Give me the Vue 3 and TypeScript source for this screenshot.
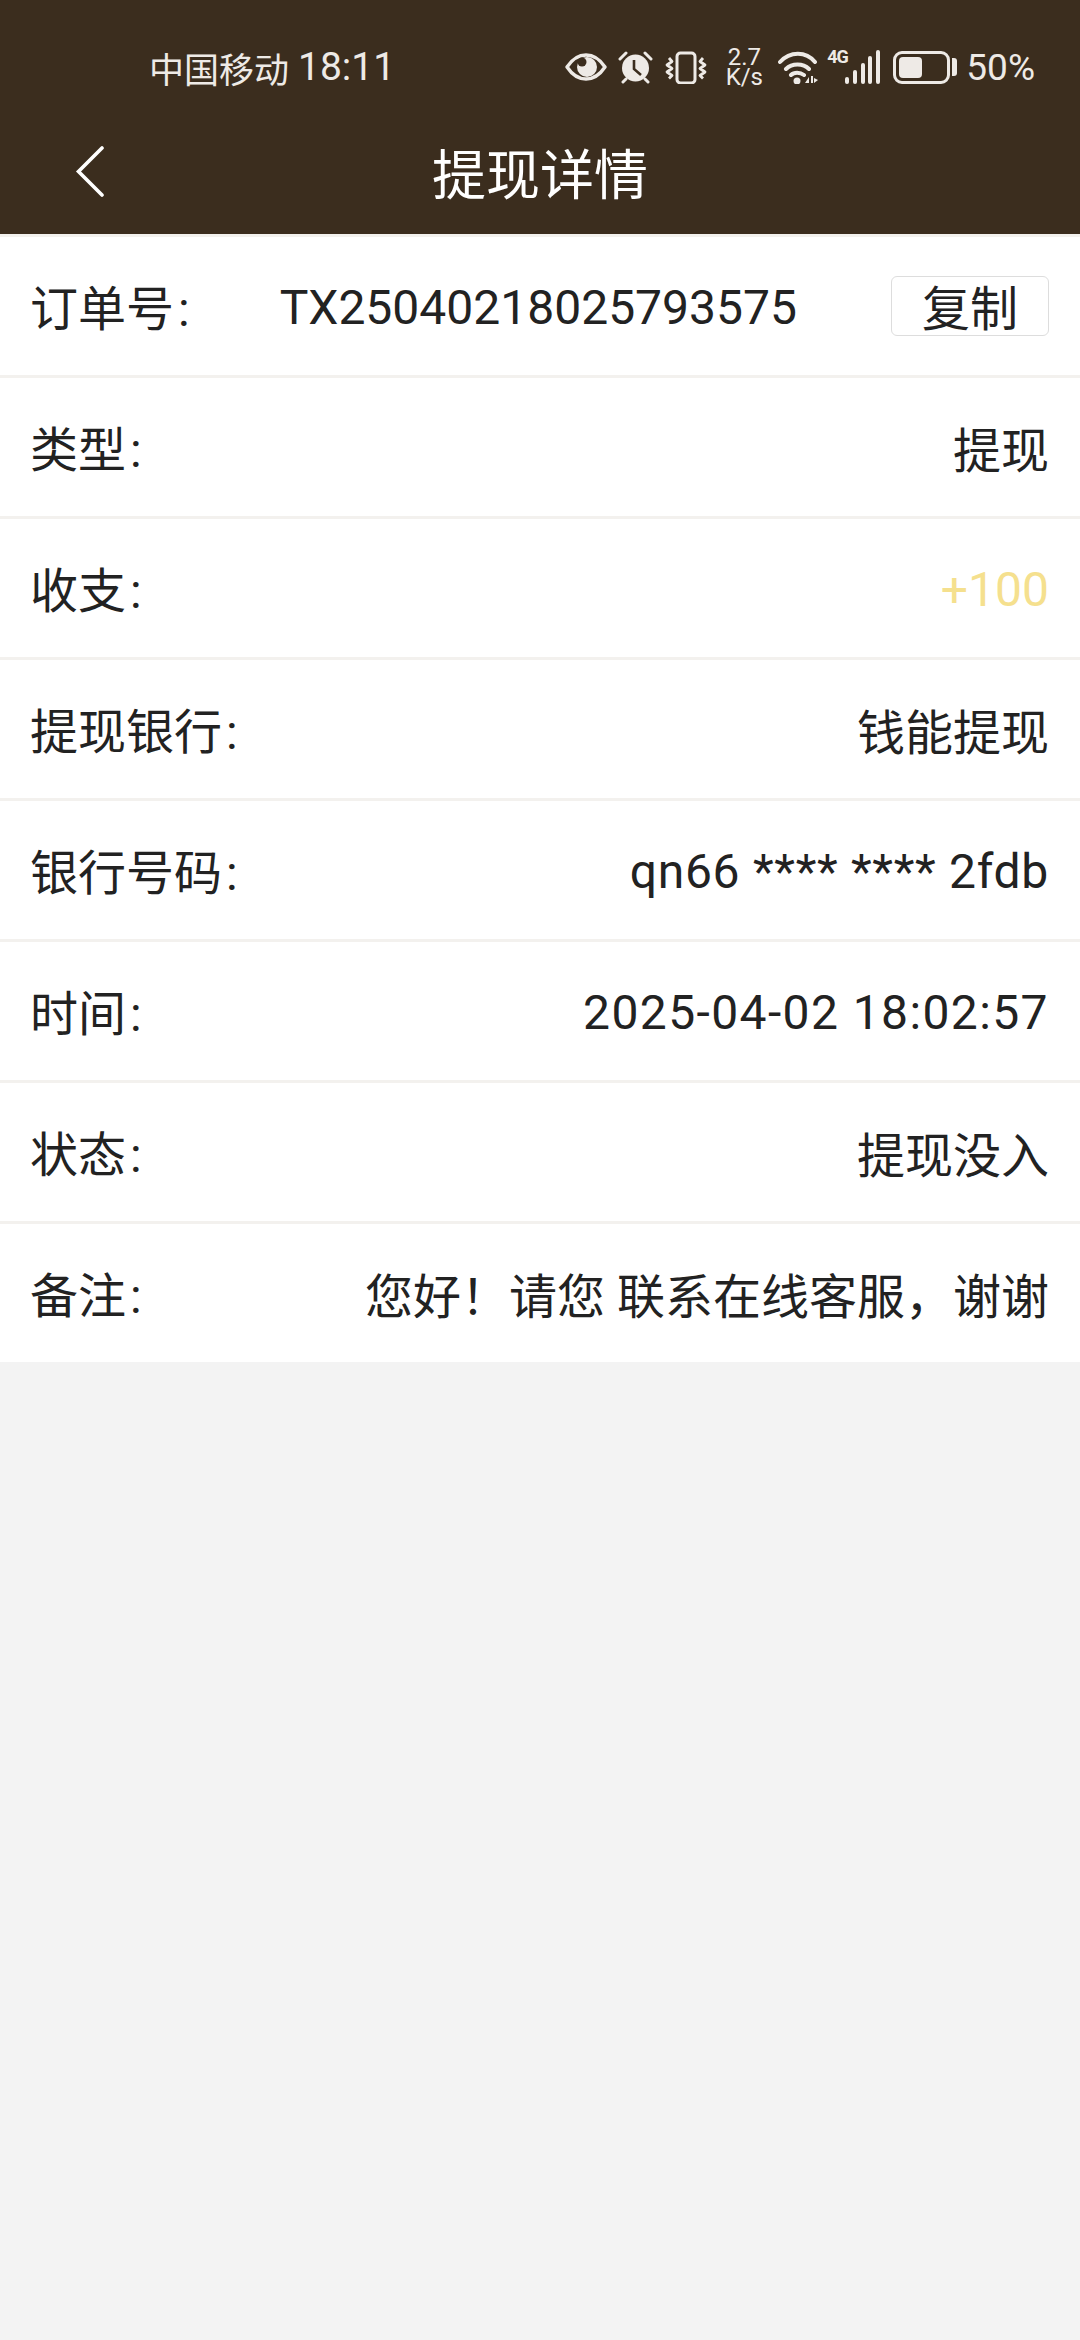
<script setup lang="ts">
type Row = { label: string; value: string; tone?: string }

const rows: Row[] = [
  { label: '类型', value: '提现' },
  { label: '收支', value: '+100', tone: 'gold' },
  { label: '提现银行', value: '钱能提现' },
  { label: '银行号码', value: 'qn66 **** **** 2fdb', tone: 'card' },
  { label: '时间', value: '2025-04-02 18:02:57', tone: 'date' },
  { label: '状态', value: '提现没入' },
  { label: '备注', value: '您好！请您 联系在线客服，谢谢' },
]
</script>

<template>
  <div class="page">
    <div class="top">
      <div class="status">
        <span class="carrier">中国移动</span>
        <span class="clock">18:11</span>
        <div class="icons">
          <svg class="eye" width="42" height="28" viewBox="0 0 42 28">
            <path d="M2 14C8 5 14 2 21 2s13 3 19 12c-6 9-12 12-19 12S8 23 2 14z" fill="none" stroke="#eeeae6" stroke-width="3.4" stroke-linejoin="round" />
            <circle cx="22" cy="14" r="10" fill="#eeeae6" />
            <circle cx="17" cy="9" r="4.500" fill="#3b2d1e" />
          </svg>
          <svg class="alarm" width="35" height="33" viewBox="0 0 35 33">
            <circle cx="17.5" cy="17" r="13.5" fill="#eeeae6" />
            <path d="M16 9v9l7 6" fill="none" stroke="#3b2d1e" stroke-width="2.6" />
            <path d="M2 8l6-6M33 8l-6-6M5 31l3-3M30 31l-3-3" stroke="#eeeae6" stroke-width="3" stroke-linecap="round" />
          </svg>
          <svg class="vibrate" width="42" height="33" viewBox="0 0 42 33">
            <rect x="12" y="2" width="18" height="30" rx="3.5" fill="none" stroke="#eeeae6" stroke-width="3" />
            <path d="M4 7l3 3.500-5 3.500 5 3.500-5 3.500 5 3.500-3 3M38 7l-3 3.500 5 3.500-5 3.500 5 3.500-5 3.500 3 3" fill="none" stroke="#eeeae6" stroke-width="2.800" stroke-linejoin="round" />
          </svg>
          <div class="speed"><span>2.7</span><span>K/s</span></div>
          <svg class="wifi" width="40" height="34" viewBox="0 0 40 34">
            <path d="M2 12C12 1 28 1 37 12M8 19c6-6 17-6 23 0M13 25c3-3 9-3 13 0" fill="none" stroke="#eeeae6" stroke-width="4" stroke-linecap="round" />
            <circle cx="19" cy="31" r="3.500" fill="#eeeae6" />
            <path d="M27 33l4-6v6zM33 26h2v7h-2zM36 28l4 2-4 3z" fill="#eeeae6" />
          </svg>
          <div class="net">
            <span class="four-g">4G</span>
            <svg width="35" height="34" viewBox="0 0 35 34">
              <g fill="#eeeae6">
                <rect x="0" y="27" width="4" height="7" rx="2" />
                <rect x="8" y="20" width="4" height="14" rx="2" />
                <rect x="16" y="13" width="4" height="21" rx="2" />
                <rect x="23" y="6" width="4" height="28" rx="2" />
                <rect x="31" y="0" width="4" height="34" rx="2" />
              </g>
            </svg>
          </div>
          <div class="battery">
            <div class="shell"><div class="level" :style="{ width: '50%' }"></div></div>
            <div class="cap"></div>
          </div>
          <span class="percent">50%</span>
        </div>
      </div>
      <div class="nav">
        <svg class="back" width="32" height="52" viewBox="0 0 32 52">
          <path d="M28 3L4.500 26.500 28 50" fill="none" stroke="#fff" stroke-width="3.600" stroke-linecap="round" />
        </svg>
        <span class="title">提现详情</span>
      </div>
    </div>

    <div class="list">
      <div class="row order">
        <span class="label">订单号<span class="colon">:</span></span>
        <span class="no">TX25040218025793575</span>
        <div class="copy">复制</div>
      </div>
      <div v-for="r in rows" :key="r.label" class="row">
        <span class="label">{{ r.label }}<span class="colon">:</span></span>
        <span class="value" :class="r.tone">{{ r.value }}</span>
      </div>
    </div>
  </div>
</template>

<style scoped>
.page {
  width: 1080px;
  height: 2340px;
  background: #f3f3f3;
  font-family: Roboto, "Noto Sans CJK SC", sans-serif;
  color: #222;
}
.top {
  height: 234px;
  background: #3b2d1e;
  display: flex;
  flex-direction: column;
}
.status {
  height: 118px;
  padding: 16px 45px 0 149px;
  display: flex;
  align-items: center;
  color: #eeeae6;
  box-sizing: border-box;
}
.carrier {
  font-size: 35px;
  margin-right: 9px;
}
.clock {
  font-size: 39px;
}
.icons {
  margin-left: auto;
  display: flex;
  align-items: center;
}
.eye { margin-right: 11px; }
.alarm { margin-right: 12px; }
.vibrate { margin-right: 19px; }
.speed {
  width: 36px;
  margin-right: 16px;
  display: flex;
  flex-direction: column;
  align-items: center;
  font-size: 24px;
  line-height: 20px;
}
.wifi { margin-right: 9px; }
.net {
  display: flex;
  align-items: flex-start;
  margin-right: 13px;
}
.four-g {
  font-size: 18px;
  font-weight: 700;
  width: 18px;
  letter-spacing: -1px;
  line-height: 14px;
}
.battery {
  display: flex;
  align-items: center;
  margin-right: 9px;
}
.shell {
  width: 57px;
  height: 33px;
  box-sizing: border-box;
  border: 3px solid #eeeae6;
  border-radius: 9px;
  padding: 3px;
}
.level {
  height: 100%;
  background: #eeeae6;
  border-radius: 4px;
}
.cap {
  width: 5px;
  height: 18px;
  margin-left: 2px;
  background: #eeeae6;
  border-radius: 0 3px 3px 0;
}
.percent {
  font-size: 37px;
}
.nav {
  flex: 1;
  position: relative;
  display: flex;
  align-items: center;
  justify-content: center;
}
.back {
  position: absolute;
  left: 74px;
  top: 27px;
}
.title {
  font-size: 54px;
  color: #fff;
  margin-bottom: 10px;
}
.list {
  background: #fff;
}
.row {
  height: 141px;
  box-sizing: border-box;
  border-top: 3px solid #f3f1ee;
  padding: 0 31px 0 30px;
  display: flex;
  align-items: center;
  justify-content: space-between;
  font-size: 48px;
}
.label {
  padding-bottom: 2px;
}
.colon {
  margin-left: 4px;
}
.order {
  justify-content: flex-start;
}
.no {
  margin-left: 90px;
  padding-top: 3px;
}
.copy {
  margin-left: auto;
  width: 158px;
  height: 60px;
  box-sizing: border-box;
  border: 1px solid #ddd;
  border-radius: 6px;
  text-align: center;
  line-height: 66px;
}
.gold {
  color: #f5e08e;
  padding-top: 2px;
}
.card {
  letter-spacing: 0.7px;
  padding-top: 2px;
}
.date {
  letter-spacing: 1.4px;
  padding-top: 2px;
}
</style>
